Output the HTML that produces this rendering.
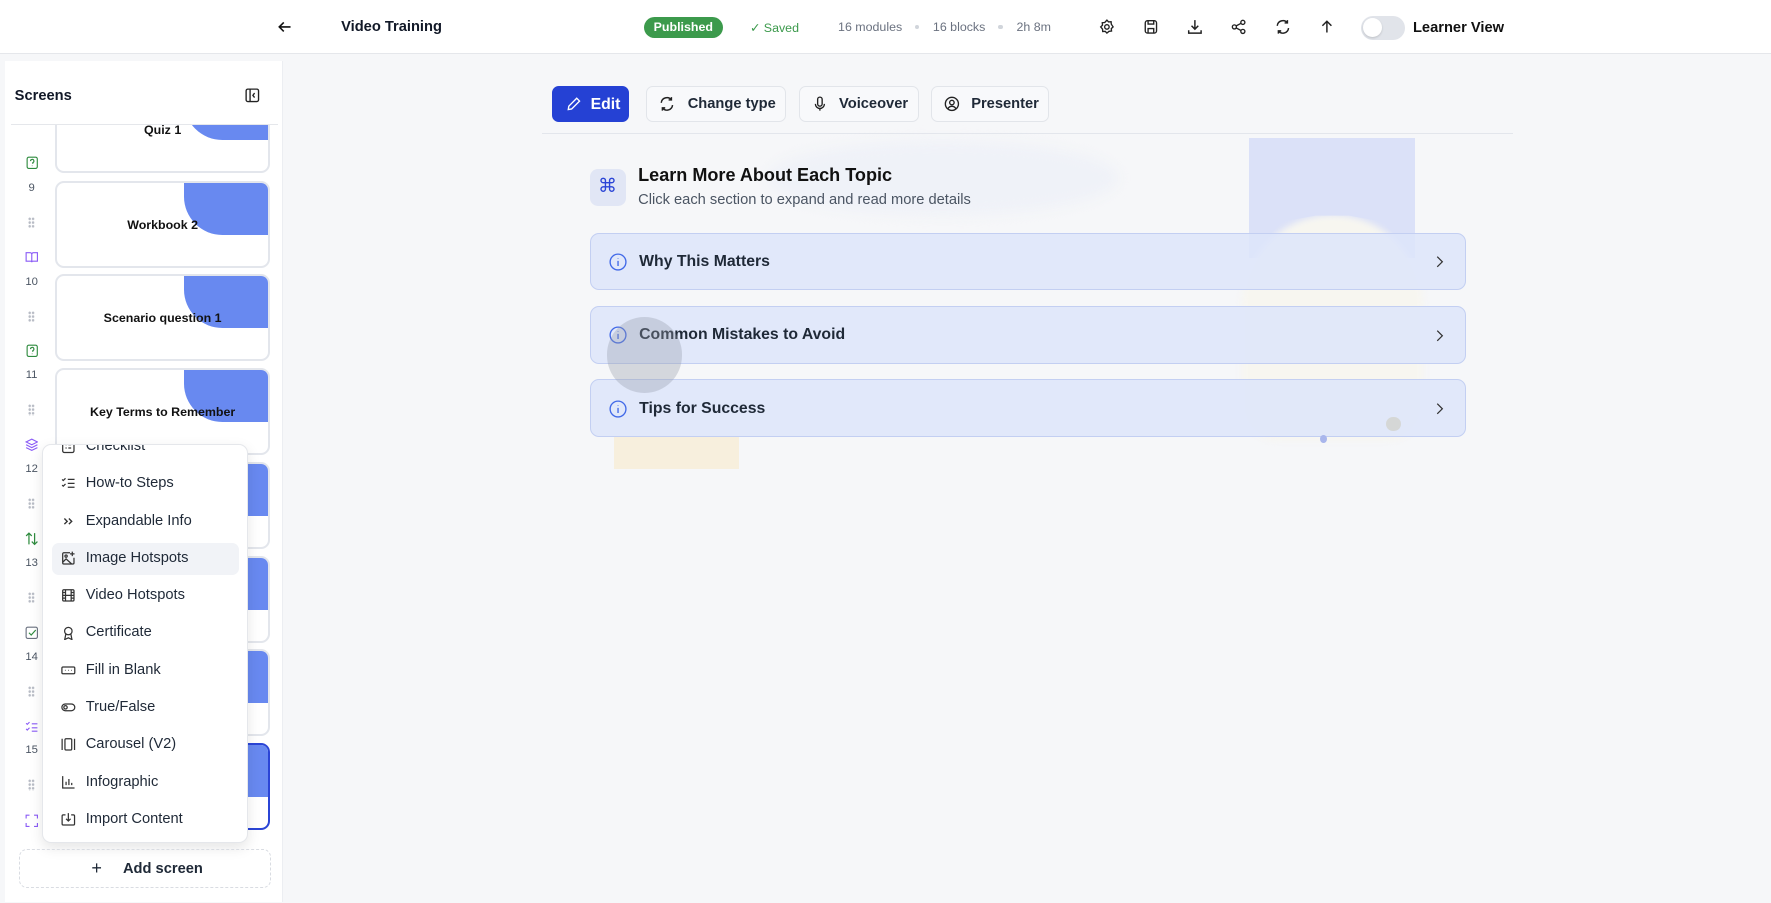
<!DOCTYPE html>
<html><head><meta charset="utf-8"><style>
*{box-sizing:border-box;margin:0;padding:0}
html,body{width:1771px;height:903px;overflow:hidden;background:#f6f7f9;font-family:"Liberation Sans",sans-serif;color:#111827}
#w{position:absolute;left:0;top:0;width:1568px;height:799px;zoom:1.12946;background:#f6f7f9}
.a{position:absolute}
svg{display:block}
.top{left:0;top:0;width:1568px;height:48px;background:#fff;border-bottom:1px solid #e5e7eb}
.meta{font-size:11px;color:#6b7280;top:18px}
.dot{width:4px;height:4px;border-radius:50%;background:#d1d5db;top:22px}
.ib{top:16px}
.side{left:4px;top:54px;width:247px;height:745px;background:#fff;border-right:1px solid #eceef2}
.card{left:49px;width:190px;height:77px;background:#fff;border:2px solid #e3e6ec;border-radius:8px;overflow:hidden}
.card .bl{position:absolute;right:0;top:0;width:74px;height:46px;background:#6889f0;border-bottom-left-radius:34px}
.card .t{position:absolute;left:0;right:0;top:31px;text-align:center;font-size:11px;font-weight:bold;color:#111}
.num{left:18px;width:20px;text-align:center;font-size:10px;color:#4b5563}
.drag{left:25px;width:6px;height:10px;background:radial-gradient(circle,#b8bcc5 1px,transparent 1.3px) 0 0/3px 3.3px}
.menu{left:37px;top:393px;width:183px;height:353px;background:#fff;border:1px solid #e5e7eb;border-radius:8px;box-shadow:0 4px 12px rgba(0,0,0,.1);overflow:hidden}
.mi{position:absolute;left:8px;width:166px;height:28px;border-radius:6px;font-size:13px;color:#1f2937}
.mi span{position:absolute;left:30px;top:6px}
.mi svg{position:absolute;left:8px;top:7px}
.btn{top:76px;height:32px;border:1px solid #e2e5ea;background:#f8f9fb;border-radius:6px;font-size:13px;font-weight:bold;color:#1f2937}
.btn span{position:absolute;top:8px}
.btn svg{position:absolute;left:11px;top:8px}
.acc{left:522px;width:776px;height:51px;background:rgba(221,229,250,.85);border:1px solid #c3cff2;border-radius:8px}
.acc span{position:absolute;left:43px;top:17px;font-size:14px;font-weight:bold;color:#1f2937}
.acc .i{position:absolute;left:16px;top:17px}
.acc .c{position:absolute;right:19px;top:19px}
</style></head><body><div id="w">
<div class="a top"></div>
<svg class="a" style="left:245px;top:17px" width="14" height="14" viewBox="0 0 14 14" fill="none" stroke="#111" stroke-width="1.4"><path d="M12 7H2M6 3L2 7l4 4"/></svg>
<div class="a" style="left:302px;top:17px;font-size:13px;font-weight:bold">Video Training</div>
<div class="a" style="left:570px;top:15px;width:70px;height:19px;border-radius:10px;background:#3c9a4c;color:#fff;font-size:11px;font-weight:bold;text-align:center;line-height:19px">Published</div>
<div class="a meta" style="left:664px;color:#3c9a4c">✓ Saved</div>
<div class="a meta" style="left:742px">16 modules</div><div class="a dot" style="left:810px"></div>
<div class="a meta" style="left:826px">16 blocks</div><div class="a dot" style="left:884px"></div>
<div class="a meta" style="left:900px">2h 8m</div>
<svg class="a ib" style="left:973px;top:17px" width="14" height="14" viewBox="0 0 14 14" fill="none" stroke="#222" stroke-width="1.2"><circle cx="7" cy="7" r="2"/><path d="M7 1l1.5 1.6 2.2-.2.2 2.2L12.5 7l-1.6 1.5.2 2.2-2.2.2L7 12.5l-1.5-1.6-2.2.2-.2-2.2L1.5 7l1.6-1.5-.2-2.2 2.2-.2z"/></svg>
<svg class="a ib" style="left:1012px;top:17px" width="14" height="14" viewBox="0 0 14 14" fill="none" stroke="#222" stroke-width="1.2"><rect x="2" y="1.5" width="10" height="11" rx="2"/><path d="M4.5 1.5v3h5v-3M4.5 12.5v-4h5v4"/></svg>
<svg class="a ib" style="left:1051px;top:17px" width="14" height="14" viewBox="0 0 14 14" fill="none" stroke="#222" stroke-width="1.3"><path d="M7 1v8M4 6l3 3 3-3M1.5 10v2.5h11V10"/></svg>
<svg class="a ib" style="left:1090px;top:17px" width="14" height="14" viewBox="0 0 14 14" fill="none" stroke="#222" stroke-width="1.2"><circle cx="3" cy="7" r="1.8"/><circle cx="10.5" cy="3" r="1.8"/><circle cx="10.5" cy="11" r="1.8"/><path d="M4.6 6.1l4.3-2.3M4.6 7.9l4.3 2.3"/></svg>
<svg class="a ib" style="left:1129px;top:17px" width="14" height="14" viewBox="0 0 14 14" fill="none" stroke="#222" stroke-width="1.3"><path d="M2 6a5 5 0 0 1 9-2.5M12 8a5 5 0 0 1-9 2.5M11 1v2.5H8.5M3 13v-2.5h2.5"/></svg>
<svg class="a ib" style="left:1168px;top:17px" width="14" height="14" viewBox="0 0 14 14" fill="none" stroke="#222" stroke-width="1.3"><path d="M7 12V2M3 6l4-4 4 4"/></svg>
<div class="a" style="left:1205px;top:14px;width:39px;height:21px;border-radius:11px;background:#e1e4ea"></div>
<div class="a" style="left:1207px;top:16px;width:17px;height:17px;border-radius:50%;background:#fff;box-shadow:0 1px 2px rgba(0,0,0,.15)"></div>
<div class="a" style="left:1251px;top:18px;font-size:13px;font-weight:bold;color:#111">Learner View</div>

<div class="a side"></div>
<div class="a" style="left:13px;top:78px;font-size:13px;font-weight:bold">Screens</div>
<svg class="a" style="left:217px;top:78px" width="13" height="13" viewBox="0 0 13 13" fill="none" stroke="#222" stroke-width="1.2"><rect x="1" y="1" width="11" height="11" rx="1.5"/><path d="M4.5 1v11M8.5 4.5L7 6.5l1.5 2"/></svg>
<div class="a" style="left:10px;top:110px;width:236px;height:1px;background:#e5e7eb"></div>
<div class="a" style="left:0;top:111px;width:251px;height:640px;overflow:hidden">
 <div class="a card" style="top:-35px;left:49px"><div class="bl"></div><div class="t">Quiz 1</div></div>
 <div class="a card" style="top:49px"><div class="bl"></div><div class="t">Workbook 2</div></div>
 <div class="a card" style="top:132px"><div class="bl"></div><div class="t">Scenario question 1</div></div>
 <div class="a card" style="top:215px"><div class="bl"></div><div class="t">Key Terms to Remember</div></div>
 <div class="a card" style="top:298px"><div class="bl"></div></div>
 <div class="a card" style="top:381px"><div class="bl"></div></div>
 <div class="a card" style="top:464px"><div class="bl"></div></div>
 <div class="a card" style="top:547px;border-color:#2b45d6"><div class="bl"></div></div>
</div>
<div class="a num" style="top:161px">9</div><div class="a num" style="top:244px">10</div><div class="a num" style="top:327px">11</div><div class="a num" style="top:410px">12</div><div class="a num" style="top:493px">13</div><div class="a num" style="top:576px">14</div><div class="a num" style="top:659px">15</div>
<div class="a drag" style="top:192px"></div><div class="a drag" style="top:275px"></div><div class="a drag" style="top:358px"></div><div class="a drag" style="top:441px"></div><div class="a drag" style="top:524px"></div><div class="a drag" style="top:607px"></div><div class="a drag" style="top:690px"></div>
<svg class="a" style="left:23px;top:138px" width="11" height="12" viewBox="0 0 11 12" fill="none" stroke="#2e8b3e" stroke-width="1"><rect x="1" y="1" width="9" height="10" rx="1.5"/><path d="M4 4.5a1.5 1.5 0 1 1 2 1.4V7M5.5 8.5v.5"/></svg>
<svg class="a" style="left:22px;top:222px" width="12" height="11" viewBox="0 0 12 11" fill="none" stroke="#8b5cf6" stroke-width="1"><path d="M1 1.5h3.5A1.5 1.5 0 0 1 6 3v7a1 1 0 0 0-1-1H1zM11 1.5H7.5A1.5 1.5 0 0 0 6 3v7a1 1 0 0 1 1-1h4z"/></svg>
<svg class="a" style="left:23px;top:305px" width="11" height="12" viewBox="0 0 11 12" fill="none" stroke="#2e8b3e" stroke-width="1"><rect x="1" y="1" width="9" height="10" rx="1.5"/><path d="M4 4.5a1.5 1.5 0 1 1 2 1.4V7M5.5 8.5v.5"/></svg>
<svg class="a" style="left:22px;top:388px" width="12" height="12" viewBox="0 0 12 12" fill="none" stroke="#8b5cf6" stroke-width="1"><path d="M6 1l5 2.5-5 2.5-5-2.5zM1 6l5 2.5L11 6M1 8.5L6 11l5-2.5"/></svg>
<svg class="a" style="left:22px;top:471px" width="12" height="12" viewBox="0 0 12 12" fill="none" stroke="#2e8b3e" stroke-width="1.1"><path d="M3.5 11V1M1 3.5L3.5 1 6 3.5M8.5 1v10M6 8.5L8.5 11 11 8.5"/></svg>
<svg class="a" style="left:22px;top:554px" width="12" height="12" viewBox="0 0 12 12" fill="none" stroke="#2e8b3e" stroke-width="1"><rect x="1" y="1" width="10" height="10" rx="1.5" stroke="#6b7280"/><path d="M3.5 6l2 2 4-4.5"/></svg>
<svg class="a" style="left:22px;top:638px" width="12" height="11" viewBox="0 0 12 11" fill="none" stroke="#8b5cf6" stroke-width="1"><path d="M1 2l1 1 2-2M1 7l1 1 2-2M6 2.5h5M6 6h5M6 9h5"/></svg>
<svg class="a" style="left:22px;top:721px" width="12" height="12" viewBox="0 0 12 12" fill="none" stroke="#8b5cf6" stroke-width="1"><path d="M1 4V1h3M8 1h3v3M11 8v3H8M4 11H1V8"/></svg>

<div class="a menu">
 <div class="mi" style="top:-12px"><svg width="13" height="13" viewBox="0 0 13 13" fill="none" stroke="#333" stroke-width="1.1"><rect x="1.5" y="1" width="10" height="11" rx="1.5"/><path d="M4 5h1M6.5 5H9M4 8h1M6.5 8H9"/></svg><span>Checklist</span></div>
 <div class="mi" style="top:21px"><svg width="13" height="13" viewBox="0 0 13 13" fill="none" stroke="#333" stroke-width="1.1"><path d="M1 3l1 1 2-2M1 8l1 1 2-2M6 3h6M6 6.5h6M6 10h6"/></svg><span>How-to Steps</span></div>
 <div class="mi" style="top:54px"><svg width="13" height="13" viewBox="0 0 13 13" fill="none" stroke="#333" stroke-width="1.2"><path d="M3 4l2.5 2.5L3 9M7 4l2.5 2.5L7 9"/></svg><span>Expandable Info</span></div>
 <div class="mi" style="top:87px;background:#f1f3f7"><svg width="13" height="13" viewBox="0 0 13 13" fill="none" stroke="#333" stroke-width="1.1"><path d="M8 1.5H2.5a1 1 0 0 0-1 1v8a1 1 0 0 0 1 1h8a1 1 0 0 0 1-1V6M1.5 10l3-3 5 4.5M10 0.5v4M8 2.5h4"/><circle cx="4.5" cy="4.5" r="1"/></svg><span>Image Hotspots</span></div>
 <div class="mi" style="top:120px"><svg width="13" height="13" viewBox="0 0 13 13" fill="none" stroke="#333" stroke-width="1.1"><rect x="1.5" y="1.5" width="10" height="10" rx="1"/><path d="M4 1.5v10M9 1.5v10M1.5 6.5h10M1.5 4h2.5M1.5 9h2.5M9 4h2.5M9 9h2.5"/></svg><span>Video Hotspots</span></div>
 <div class="mi" style="top:153px"><svg width="13" height="13" viewBox="0 0 13 13" fill="none" stroke="#333" stroke-width="1.1"><circle cx="6.5" cy="4.5" r="3.3"/><path d="M4.3 7l-1 5 3.2-1.5 3.2 1.5-1-5"/></svg><span>Certificate</span></div>
 <div class="mi" style="top:186px"><svg width="13" height="13" viewBox="0 0 13 13" fill="none" stroke="#333" stroke-width="1.1"><rect x="0.8" y="3.5" width="11.4" height="6" rx="1"/><path d="M3.5 6.5h.5M6.3 6.5h.5M9 6.5h.5"/></svg><span>Fill in Blank</span></div>
 <div class="mi" style="top:219px"><svg width="13" height="13" viewBox="0 0 13 13" fill="none" stroke="#333" stroke-width="1.1"><rect x="0.8" y="3.5" width="11.4" height="6" rx="3"/><circle cx="4" cy="6.5" r="1.5"/></svg><span>True/False</span></div>
 <div class="mi" style="top:252px"><svg width="13" height="13" viewBox="0 0 13 13" fill="none" stroke="#333" stroke-width="1.1"><rect x="3.5" y="1.5" width="6" height="10" rx="1"/><path d="M1 1.5v10M12 1.5v10"/></svg><span>Carousel (V2)</span></div>
 <div class="mi" style="top:285px"><svg width="13" height="13" viewBox="0 0 13 13" fill="none" stroke="#333" stroke-width="1.1"><path d="M1.5 1v10.5H12M4.5 9V6M7 9V3.5M9.5 9V7"/></svg><span>Infographic</span></div>
 <div class="mi" style="top:318px"><svg width="13" height="13" viewBox="0 0 13 13" fill="none" stroke="#333" stroke-width="1.1"><path d="M4 2.5H2a1 1 0 0 0-1 1v7a1 1 0 0 0 1 1h9a1 1 0 0 0 1-1v-7a1 1 0 0 0-1-1H9M6.5 1v7M4.5 6l2 2 2-2"/></svg><span>Import Content</span></div>
</div>
<div class="a" style="left:17px;top:752px;width:223px;height:34px;border:1px dashed #d9dce2;border-radius:7px;font-size:13px;font-weight:bold;color:#1f2937"><span class="a" style="left:63px;top:7px;font-size:16px;font-weight:normal">+</span><span class="a" style="left:91px;top:9px">Add screen</span></div>

<div class="a btn" style="left:489px;width:68px;background:#2541d4;border-color:#2541d4;color:#fff"><svg width="14" height="14" viewBox="0 0 14 14" fill="none" stroke="#fff" stroke-width="1.2"><path d="M9.5 2l2.5 2.5L5 11.5 2 12l.5-3z"/></svg><span style="left:33px;font-size:14px">Edit</span></div>
<div class="a btn" style="left:572px;width:124px"><svg width="14" height="14" viewBox="0 0 14 14" fill="none" stroke="#222" stroke-width="1.3"><path d="M2 6a5 5 0 0 1 9-2.5M12 8a5 5 0 0 1-9 2.5M11 1v2.5H8.5M3 13v-2.5h2.5"/></svg><span style="left:36px">Change type</span></div>
<div class="a btn" style="left:707px;width:107px"><svg width="14" height="14" viewBox="0 0 14 14" fill="none" stroke="#222" stroke-width="1.2"><rect x="5" y="1" width="4" height="8" rx="2"/><path d="M3 7a4 4 0 0 0 8 0M7 11v2"/></svg><span style="left:35px">Voiceover</span></div>
<div class="a btn" style="left:824px;width:105px"><svg width="14" height="14" viewBox="0 0 14 14" fill="none" stroke="#222" stroke-width="1.2"><circle cx="7" cy="7" r="5.8"/><circle cx="7" cy="5.8" r="2"/><path d="M3.5 11.2a4 4 0 0 1 7 0"/></svg><span style="left:35px">Presenter</span></div>
<div class="a" style="left:480px;top:118px;width:860px;height:1px;background:#e3e6ec"></div>

<div class="a" style="left:680px;top:125px;width:310px;height:65px;border-radius:50%;background:rgba(236,239,248,.7);filter:blur(6px)"></div>
<div class="a" style="left:1106px;top:122px;width:147px;height:106px;background:#dbe1f8"></div>
<div class="a" style="left:1100px;top:190px;width:160px;height:200px;border-radius:80px 80px 30px 30px;background:#f7f6f0;filter:blur(3px)"></div>
<div class="a" style="left:1106px;top:122px;width:147px;height:106px;background:linear-gradient(#dbe1f8,#dbe1f8) ;clip-path:polygon(0 100%,0 0,100% 0,100% 100%,80% 70%,60% 65%,40% 65%,20% 70%);"></div>
<div class="a" style="left:544px;top:386px;width:110px;height:29px;background:#f7efdd"></div>

<div class="a" style="left:522px;top:150px;width:32px;height:32px;border-radius:7px;background:#e1e6f5;color:#2b45d6;font-size:17px;text-align:center;line-height:31px">⌘</div>
<div class="a" style="left:565px;top:146px;font-size:16px;font-weight:bold;color:#111">Learn More About Each Topic</div>
<div class="a" style="left:565px;top:170px;font-size:13px;color:#4b5563">Click each section to expand and read more details</div>

<div class="a acc" style="top:206px"><svg class="i" width="16" height="16" viewBox="0 0 16 16" fill="none" stroke="#4169e8" stroke-width="1.2"><circle cx="8" cy="8" r="7"/><path d="M8 7v4.5M8 4.5v.5"/></svg><span>Why This Matters</span><svg class="c" width="8" height="12" viewBox="0 0 8 12" fill="none" stroke="#333" stroke-width="1.1"><path d="M2 1.5L6.5 6 2 10.5"/></svg></div>
<div class="a acc" style="top:271px"><svg class="i" width="16" height="16" viewBox="0 0 16 16" fill="none" stroke="#4169e8" stroke-width="1.2"><circle cx="8" cy="8" r="7"/><path d="M8 7v4.5M8 4.5v.5"/></svg><span>Common Mistakes to Avoid</span><svg class="c" width="8" height="12" viewBox="0 0 8 12" fill="none" stroke="#333" stroke-width="1.1"><path d="M2 1.5L6.5 6 2 10.5"/></svg></div>
<div class="a acc" style="top:336px"><svg class="i" width="16" height="16" viewBox="0 0 16 16" fill="none" stroke="#4169e8" stroke-width="1.2"><circle cx="8" cy="8" r="7"/><path d="M8 7v4.5M8 4.5v.5"/></svg><span>Tips for Success</span><svg class="c" width="8" height="12" viewBox="0 0 8 12" fill="none" stroke="#333" stroke-width="1.1"><path d="M2 1.5L6.5 6 2 10.5"/></svg></div>
<div class="a" style="left:537px;top:281px;width:67px;height:67px;border-radius:50%;background:rgba(150,155,170,.35)"></div>
<div class="a" style="left:1227px;top:369px;width:13px;height:13px;border-radius:50%;background:rgba(200,195,170,.45)"></div>
<div class="a" style="left:1169px;top:385px;width:6px;height:7px;border-radius:50%;background:#a9b6ec"></div>
</div></body></html>
